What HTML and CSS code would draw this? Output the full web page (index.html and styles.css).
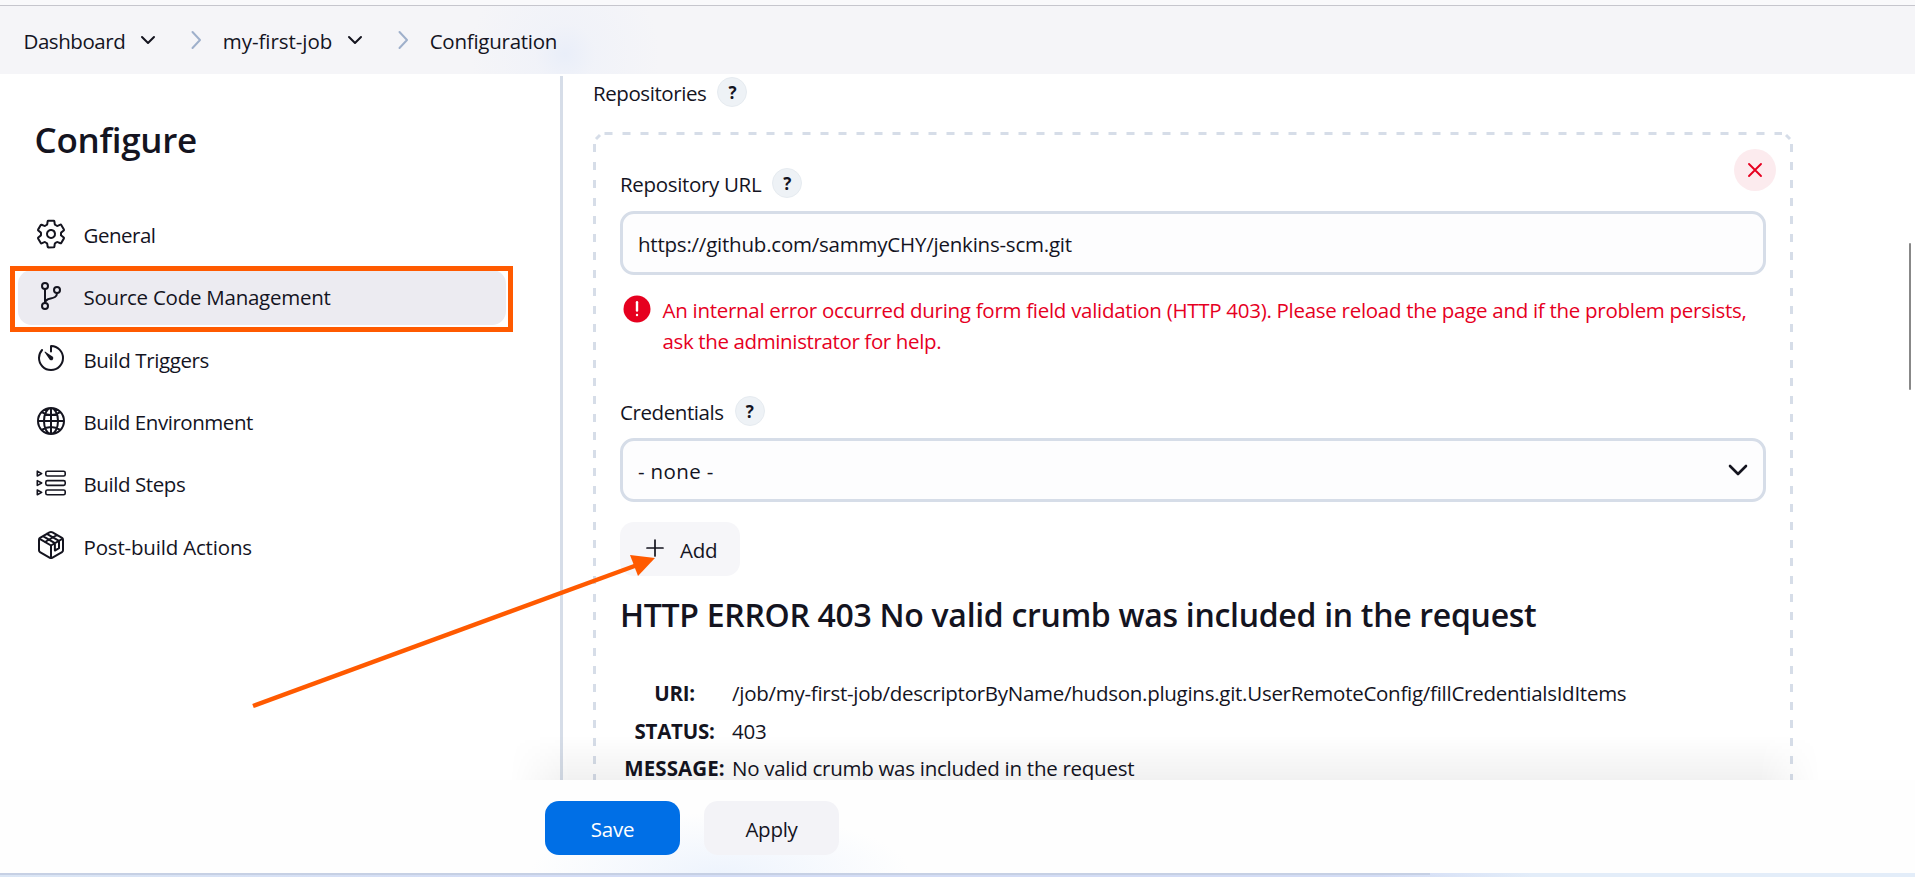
FILE: index.html
```html
<!DOCTYPE html>
<html lang="en">
<head>
<meta charset="utf-8">
<title>my-first-job Config</title>
<link rel="stylesheet" href="styles.css">
</head>
<body>
<div class="page">
  <div class="topline"></div>
  <header class="crumbs">
    <span class="crumb t-dash">Dashboard</span>
    <svg class="chev" viewBox="0 0 16 16"><path d="M2 5l6 6 6-6"/></svg>
    <svg class="sep" viewBox="0 0 12 20"><path d="M2.500 2l7.500 8-7.500 8"/></svg>
    <span class="crumb t-job">my-first-job</span>
    <svg class="chev" viewBox="0 0 16 16"><path d="M2 5l6 6 6-6"/></svg>
    <svg class="sep" viewBox="0 0 12 20"><path d="M2.500 2l7.500 8-7.500 8"/></svg>
    <span class="crumb t-conf">Configuration</span>
  </header>

  <div class="body">
    <aside class="side">
      <h1 class="title">Configure</h1>
      <nav class="nav">
        <a class="item"><svg class="ico" viewBox="0 0 512 512"><path d="M262.290 192.310a64 64 0 1057.400 57.400 64.130 64.130 0 00-57.400-57.400zM416.390 256a154.340 154.340 0 01-1.530 20.790l45.210 35.460a10.810 10.810 0 012.450 13.750l-42.770 74a10.810 10.810 0 01-13.140 4.590l-44.900-18.080a16.110 16.110 0 00-15.170 1.750A164.480 164.480 0 01325 400.800a15.940 15.940 0 00-8.820 12.140l-6.730 47.890a11.080 11.080 0 01-10.680 9.170h-85.540a11.110 11.110 0 01-10.690-8.870l-6.720-47.820a16.070 16.070 0 00-9-12.220 155.300 155.300 0 01-21.460-12.570 16 16 0 00-15.110-1.710l-44.890 18.070a10.810 10.810 0 01-13.140-4.580l-42.770-74a10.800 10.800 0 012.450-13.750l38.210-30a16.050 16.050 0 006-14.080c-.36-4.170-.58-8.330-.58-12.500s.21-8.270.58-12.350a16 16 0 00-6.070-13.940l-38.190-30A10.810 10.810 0 0149.480 186l42.770-74a10.810 10.810 0 0113.140-4.590l44.900 18.080a16.110 16.110 0 0015.170-1.750A164.480 164.480 0 01187 111.200a15.940 15.940 0 008.820-12.140l6.730-47.890A11.080 11.080 0 01213.230 42h85.540a11.110 11.110 0 0110.690 8.870l6.720 47.820a16.070 16.070 0 009 12.220 155.300 155.300 0 0121.460 12.570 16 16 0 0015.110 1.710l44.890-18.070a10.810 10.810 0 0113.140 4.580l42.770 74a10.800 10.800 0 01-2.450 13.750l-38.210 30a16.050 16.050 0 00-6.050 14.080c.33 4.140.55 8.300.55 12.470z"/></svg><span class="t-general">General</span></a>
        <a class="item on"><svg class="ico" viewBox="0 0 512 512"><circle cx="160" cy="96" r="48"/><circle cx="160" cy="416" r="48"/><path d="M160 368V144"/><circle cx="352" cy="160" r="48"/><path d="M352 208c0 128-192 48-192 160"/></svg><span class="t-scm">Source Code Management</span></a>
        <a class="item"><svg class="ico" viewBox="0 0 512 512"><path d="M112.910 128A191.850 191.850 0 0064 254c-1.180 106.350 85.650 193.800 192 194 106.200.2 192-85.830 192-192 0-104.540-83.550-189.610-187.500-192a4.360 4.360 0 00-4.500 4.370V152"/><path class="fill" d="M233.380 278.630l-79-113a8.130 8.130 0 0111.320-11.320l113 79a32.500 32.500 0 01-37.250 53.260 33.210 33.210 0 01-8.070-7.940z"/></svg><span class="t-trig">Build Triggers</span></a>
        <a class="item"><svg class="ico" viewBox="0 0 512 512"><path d="M256 48C141.130 48 48 141.130 48 256s93.130 208 208 208 208-93.130 208-208S370.870 48 256 48zM256 48c-58.070 0-112.670 93.130-112.670 208S197.930 464 256 464s112.670-93.130 112.670-208S314.070 48 256 48zM117.330 117.330c38.240 27.150 86.380 43.340 138.670 43.340s100.430-16.190 138.670-43.340M394.670 394.670c-38.240-27.150-86.380-43.340-138.670-43.340s-100.430 16.190-138.670 43.340M256 48v416M464 256H48"/></svg><span class="t-env">Build Environment</span></a>
        <a class="item"><svg class="ico thin" viewBox="0 0 32 32"><rect x="10.800" y="4.200" width="19.400" height="4.800" rx="1.600"/><rect x="10.800" y="13.600" width="19.400" height="4.800" rx="1.600"/><rect x="10.800" y="23" width="19.400" height="4.800" rx="1.600"/><path d="M2.300 4.200v4.800l4.400-2.400zM2.300 13.600v4.800l4.400-2.400zM2.300 23v4.800l4.400-2.400z"/></svg><span class="t-steps">Build Steps</span></a>
        <a class="item"><svg class="ico" viewBox="0 0 512 512"><path d="M448 341.370V170.610A32 32 0 00432.110 143l-152-88.460a47.940 47.940 0 00-48.240 0L79.890 143A32 32 0 0064 170.610v170.760A32 32 0 0079.890 369l152 88.460a48 48 0 0048.240 0l152-88.460A32 32 0 00448 341.370zM69 153.990l187 110 187-110M256 463.990v-200M128 115l190 112v118l66-38V190L190 78M160 208l190-112"/></svg><span class="t-post">Post-build Actions</span></a>
      </nav>
    </aside>

    <main class="main">
      <div class="label first"><span class="t-repos">Repositories</span><b class="help">?</b></div>
      <section class="repo">
        <svg class="dashes" width="1200" height="700"><path d="M11.500 1.500H1189"/><path d="M1.500 12V700"/><path d="M1198.500 12V700"/><path class="c" d="M3 7l4-4M1197 7l-4-4"/></svg>
        <button class="close"><svg viewBox="0 0 16 16"><path d="M2 2l12 12M14 2L2 14"/></svg></button>
        <div class="label url"><span class="t-url">Repository URL</span><b class="help">?</b></div>
        <div class="field"><span class="t-git">https://github.com/sammyCHY/jenkins-scm.git</span></div>
        <div class="error">
          <svg class="warn" viewBox="0 0 28 28"><circle cx="14" cy="14" r="13.500"/><path d="M14 7.200v8.300"/><path d="M14 20v.1"/></svg>
          <div><div class="t-e1">An internal error occurred during form field validation (HTTP 403). Please reload the page and if the problem persists,</div><div class="t-e2">ask the administrator for help.</div></div>
        </div>
        <div class="label cred"><span class="t-cred">Credentials</span><b class="help">?</b></div>
        <div class="field"><span class="t-none">- none -</span><svg class="down" viewBox="0 0 20 12"><path d="M2 2l8 8 8-8"/></svg></div>
        <button class="btn add"><svg viewBox="0 0 18 18"><path d="M9 1v16M1 9h16"/></svg><span class="t-add">Add</span></button>
        <h2 class="err"><span class="t-h2">HTTP ERROR 403 No valid crumb was included in the request</span></h2>
        <div class="info">
          <b class="t-uri">URI:</b><span class="t-path">/job/my-first-job/descriptorByName/hudson.plugins.git.UserRemoteConfig/fillCredentialsIdItems</span>
          <b class="t-status">STATUS:</b><span class="t-403">403</span>
          <b class="t-msg">MESSAGE:</b><span class="t-no">No valid crumb was included in the request</span>
        </div>
      </section>
      <div class="thumb"></div>
    </main>
  </div>

  <footer class="bar">
    <button class="btn save"><span class="t-save">Save</span></button>
    <button class="btn apply"><span class="t-apply">Apply</span></button>
  </footer>
  <div class="bottomline"><i></i></div>

  <div class="mark"></div>
  <svg class="arrow" width="420" height="170" viewBox="0 0 420 170"><path class="shaft" d="M13 166L400 24"/><path class="head" d="M415 18L390 15 398 36z"/></svg>
</div>
</body>
</html>
```
FILE: styles.css
```css
* { box-sizing: border-box; }
body { margin: 0; font-family: "Open Sans", "Noto Sans", sans-serif; font-size: 20.500px; letter-spacing: -.25px; color: #14141f; background: #fff; }
svg { fill: none; stroke: currentColor; stroke-linecap: round; stroke-linejoin: round; flex: none; display: block; }
span { white-space: nowrap; }
button { font: inherit; letter-spacing: inherit; color: inherit; border: 0; padding: 0; }
.page { position: relative; width: 1915px; height: 877px; overflow: hidden; display: flex; flex-direction: column; }
.topline { height: 6px; background: #f9f9fb; border-bottom: 1px solid #c6c6cd; flex: none; }
.crumbs { height: 68px; flex: none; display: flex; align-items: center; padding: 1px 0 0 23.500px; background: radial-gradient(circle at 565px 48px, #e9eef9 0, rgba(238,241,249,.6) 30px, rgba(245,245,248,0) 95px), #f5f5f8; }
.chev { width: 16px; height: 16px; stroke-width: 2; margin: -2px 0 0 15px; }
.sep { width: 12px; height: 20px; stroke: #9fb0cb; stroke-width: 2; margin: -2px 20.500px 0 34px; }
.body { height: 706px; flex: none; display: flex; overflow: hidden; }
.side { width: 563px; border-right: 3px solid #d6dde8; margin-top: 2px; }
.title { margin: 41px 0 0 34.500px; font-size: 35px; line-height: 46px; font-weight: 600; letter-spacing: -.3px; }
.nav { display: flex; flex-direction: column; gap: 7.400px; margin: 45px 0 0 18px; width: 488px; }
.item { height: 55px; border-radius: 14px; display: flex; align-items: center; padding: 0 0 0 17px; gap: 16.500px; }
.item.on { background: #ecebf1; }
.item span { padding-bottom: 1.500px; }
.ico { width: 32px; height: 32px; stroke-width: 32; margin-top: -4px; }
.ico.thin { stroke-width: 1.600; }
.ico .fill { fill: currentColor; stroke: none; }
.main { position: relative; flex: 1; padding-left: 30px; }
.label { display: flex; align-items: center; gap: 11px; height: 30px; }
.label span { padding-top: 1px; }
.first { margin-top: 3px; }
.help { width: 30px; height: 30px; border-radius: 50%; background: #eef2f6; border: 1px solid #e6ebf0; display: flex; align-items: center; justify-content: center; font-size: 17px; font-weight: 700; }
.repo { position: relative; width: 1200px; height: 700px; margin-top: 25px; padding: 36px 27px 0; }
.dashes { position: absolute; left: 0; top: 0; stroke: #d6dde8; stroke-width: 3; stroke-dasharray: 8 10; stroke-linecap: butt; }
.dashes .c { stroke-dasharray: none; }
.close { position: absolute; right: 17px; top: 17px; width: 42px; height: 42px; border-radius: 50%; background: #fcebee; color: #e6001f; display: flex; align-items: center; justify-content: center; }
.close svg { width: 16px; height: 16px; stroke-width: 1.900; }
.field { height: 64px; border: 3px solid #d6dde8; border-radius: 14px; background: #fdfdfe; display: flex; align-items: center; justify-content: space-between; padding: 2px 15px 0 15px; }
.url { margin-bottom: 13px; }
.error { display: flex; gap: 12px; color: #e6001f; margin-top: 20px; line-height: 31px; padding-left: 2.500px; white-space: nowrap; }
.warn { width: 28px; height: 28px; fill: #e6001f; stroke: none; margin-top: 0; }
.warn path { stroke: #fff; stroke-width: 2.400; }
.cred { margin: 39px 0 12px; }
.down { width: 20px; height: 12px; stroke-width: 2.600; margin-top: -3px; }
.btn { height: 54px; border-radius: 14px; background: #f6f6f9; display: flex; align-items: center; justify-content: center; padding-top: 1px; }
.add { width: 120px; margin-top: 20px; justify-content: flex-start; padding-left: 26px; gap: 16px; }
.add svg { width: 18px; height: 18px; stroke-width: 1.700; margin-top: -3px; }
.err { margin: 18px 0 0; font-size: 32px; line-height: 42px; font-weight: 600; letter-spacing: -.3px; }
.info { display: grid; grid-template-columns: 109px auto; column-gap: 3px; justify-content: start; margin-top: 39px; line-height: 37.600px; }
.info b { text-align: center; white-space: nowrap; }
.t-dash { letter-spacing: -.45px; }
.t-job { letter-spacing: -.05px; }
.t-general { letter-spacing: -.5px; }
.t-trig { letter-spacing: -.38px; }
.t-env { letter-spacing: -.45px; }
.t-steps { letter-spacing: -.42px; }
.t-post { letter-spacing: -.18px; }
.t-repos { letter-spacing: -.42px; }
.t-url { letter-spacing: -.33px; }
.t-git { letter-spacing: -.22px; }
.t-e1 { letter-spacing: -.285px; }
.t-e2 { letter-spacing: -.37px; }
.t-cred { letter-spacing: -.42px; }
.t-none { letter-spacing: .35px; }
.t-path, .t-no { letter-spacing: -.27px; }
.t-msg { letter-spacing: .1px; }
.thumb { position: absolute; right: 4px; top: 169px; width: 2px; height: 147px; background: #888; border-radius: 1px; }
.bar { position: relative; height: 93px; flex: none; display: flex; gap: 24px; padding: 21px 0 0 545px; background: radial-gradient(ellipse 190px 60px at 720px 93px, #eef4fd, rgba(255,255,255,0)), #fefefe; }
.bar::before { content: ""; position: absolute; left: 510px; top: -45px; width: 1310px; height: 45px; background: linear-gradient(rgba(0,0,0,0), rgba(0,0,0,.055)); mask-image: linear-gradient(90deg, transparent, #000 60px, #000 1250px, transparent); }
.save { width: 135px; background: #006fe6; color: #fff; }
.apply { width: 135px; background: #f3f3f7; }
.bottomline { height: 4px; flex: none; background: linear-gradient(90deg, #dbe6f5, #d3dcf5 28%, #d3dcf5 72%, #e3edf9 80%); }
.bottomline i { display: block; width: 1430px; height: 2px; background: #c6d0e4; }
.mark { position: absolute; left: 10px; top: 266px; width: 503px; height: 66px; border: 5px solid #ff5a00; }
.arrow { position: absolute; left: 240px; top: 540px; }
.shaft { stroke: #ff5a00; stroke-width: 4.500; stroke-linecap: butt; }
.head { fill: #ff5a00; stroke: none; }
```
